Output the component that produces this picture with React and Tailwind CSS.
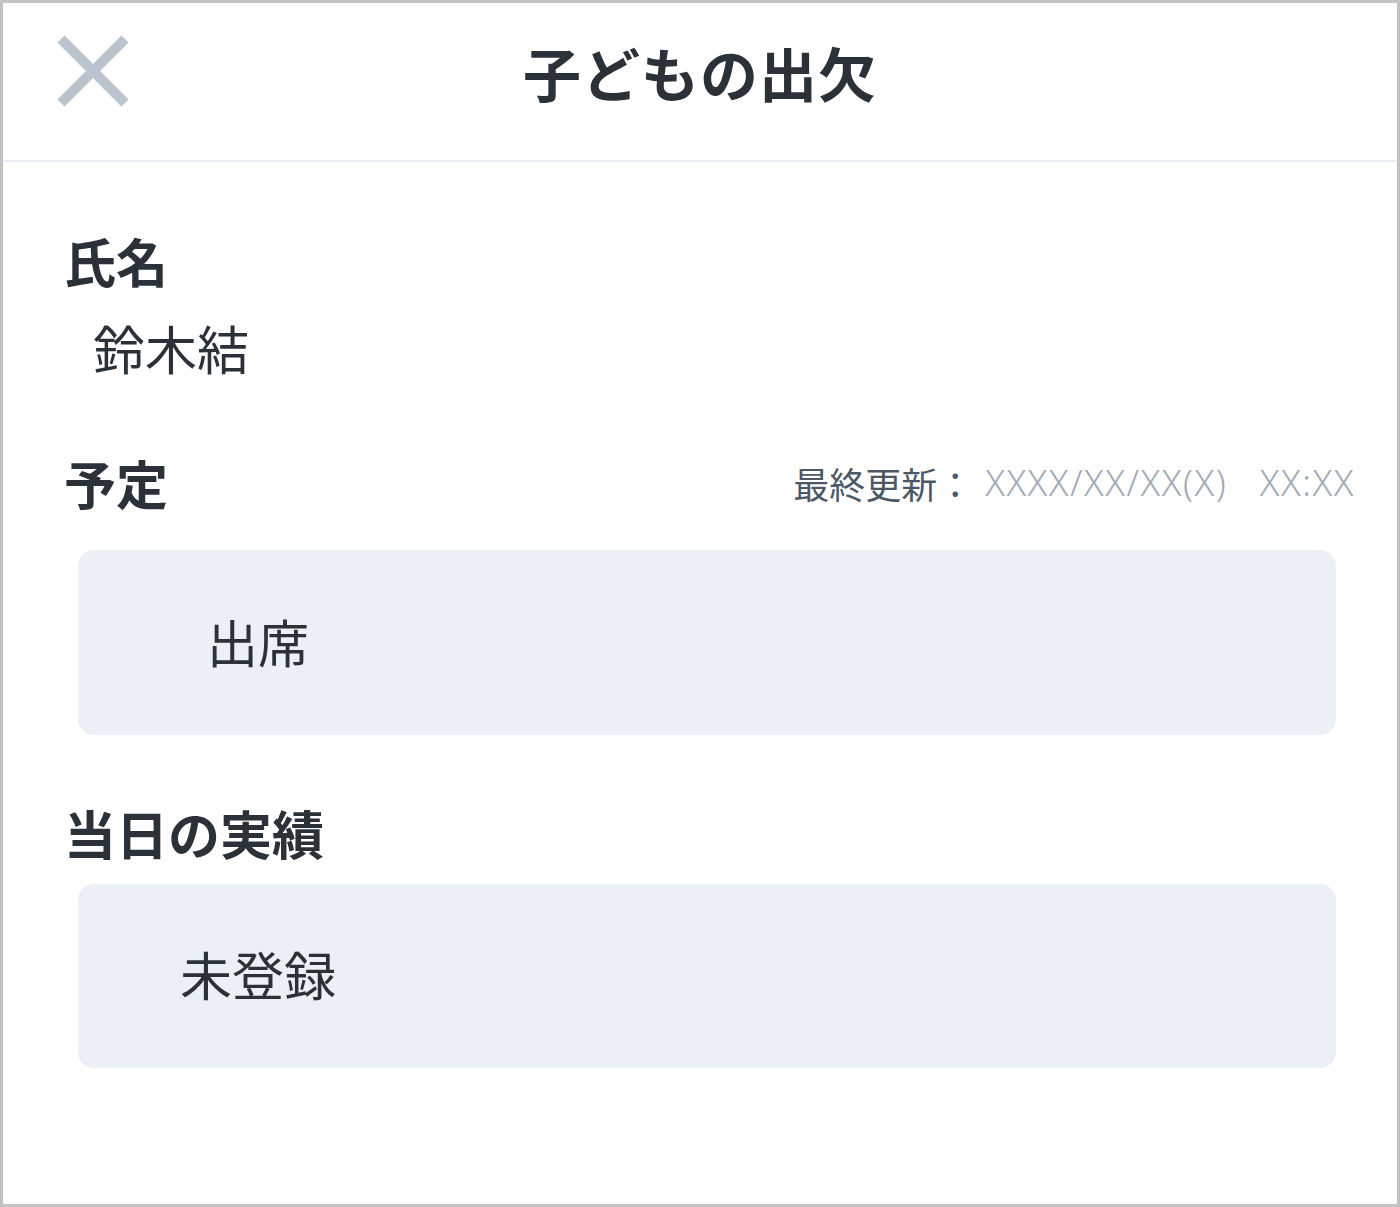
export default function App() {
  const jp = { fontFamily: '"Noto Sans CJK JP", "Noto Sans", sans-serif' };
  return (
    <div className="w-[1400px] h-[1207px] bg-white" style={jp}>
      <div className="h-full border-[3px] border-[#c2c2c2] flex flex-col text-[#2b3138]">
        {/* header */}
        <header className="relative h-[159px] shrink-0 border-b-2 border-[#e8eef6] flex items-center justify-center">
          <button className="absolute left-[50px] top-[28px] w-[80px] h-[80px] flex items-center justify-center">
            <svg width="72" height="72" viewBox="0 0 72 72">
              <path d="M4 4 L68 68 M68 4 L4 68" stroke="#bac4ce" strokeWidth="10" />
            </svg>
          </button>
          <h1 className="text-[58px] leading-[60px] font-bold tracking-[1px] -mt-[20px]">子どもの出欠</h1>
        </header>

        <main className="pl-[61px] pr-[42px] pt-[69px]">
          <h2 className="text-[52px] leading-[60px] font-bold">氏名</h2>
          <p className="mt-[27px] ml-[29px] text-[52px] leading-[60px]">鈴木結</p>

          <div className="mt-[75px] flex items-center justify-between">
            <h2 className="text-[52px] leading-[60px] font-bold">予定</h2>
            <p className="text-[36px] leading-[60px] flex items-center -mt-[1px]">
              <span className="text-[#4d5866]">最終更新：</span>
              <span className="ml-[12px] text-[#a3abb6] font-light tracking-[1.5px]" style={{ fontFamily: '"Noto Sans", sans-serif' }}>
                XXXX/XX/XX(X)&nbsp;&nbsp;&nbsp;XX:XX
              </span>
            </p>
          </div>

          <div className="mt-[37px] ml-[14px] mr-[19px] h-[185px] rounded-[16px] bg-[#ebf0f7] flex items-center">
            <span className="w-[360px] text-center text-[51px] leading-[60px] -mt-[4px]">出席</span>
          </div>

          <h2 className="mt-[68px] text-[52px] leading-[60px] font-bold">当日の実績</h2>

          <div className="mt-[21px] ml-[14px] mr-[19px] h-[184px] rounded-[16px] bg-[#ebf0f7] flex items-center">
            <span className="w-[360px] text-center text-[52px] leading-[60px] -mt-[4px]">未登録</span>
          </div>
        </main>
      </div>
    </div>
  );
}
